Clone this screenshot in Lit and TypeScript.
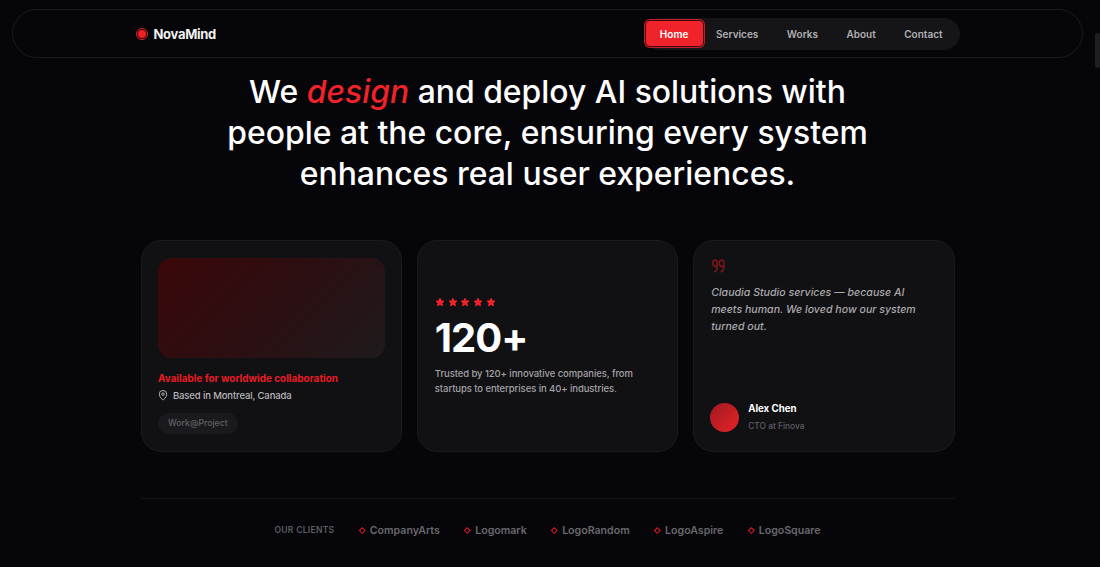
import { LitElement, html, css } from "lit";
import { customElement } from "lit/decorators.js";

const star = html`<svg class="star" viewBox="0 0 24 24" aria-hidden="true"><path d="M12 3l2.8 6.1 6.7.8-5 4.6 1.4 6.6L12 17.8l-5.9 3.3 1.4-6.6-5-4.6 6.7-.8z"/></svg>`;

const clients = ["CompanyArts", "Logomark", "LogoRandom", "LogoAspire", "LogoSquare"];

@customElement("app-root")
export class AppRoot extends LitElement {
  static styles = css`
    :host {
      display: block;
      width: 1100px;
      height: 567px;
      overflow: hidden;
      position: relative;
      background: #060509;
      font-family: "Inter", "Liberation Sans", sans-serif;
      color: #fff;
    }
    .page { width: 1095px; display: flex; flex-direction: column; align-items: center; }
    .header {
      box-sizing: border-box;
      width: 1071px;
      height: 49px;
      margin: 9px 0 0;
      border: 1px solid #1b1a1e;
      border-radius: 25px;
      display: flex;
      justify-content: center;
      align-items: center;
    }
    .bar { width: 824px; display: flex; justify-content: space-between; align-items: center; }
    .brand { display: flex; align-items: center; gap: 6px; font-size: 13px; font-weight: 700; color: #f2f2f2; letter-spacing: -0.3px; }
    .dot {
      box-sizing: border-box; width: 12px; height: 12px; border-radius: 50%;
      border: 1px solid #ee2029; padding: 1px; display: flex;
    }
    .dot i { flex: 1; border-radius: 50%; background: #ee2029; }
    .nav {
      display: flex; align-items: center; background: #151417; border-radius: 16px; height: 32px;
      font-size: 10px; font-weight: 600; color: #b0afb3; padding-right: 2.75px;
    }
    .nav a { padding: 0 14.25px; line-height: 32px; }
    .nav a.active {
      box-sizing: border-box; width: 57px; height: 25px; margin: 0 -0.75px 0 1.5px; padding: 0;
      text-align: center; line-height: 26px; color: #fff;
      background: #ef2329; border-radius: 4px;
      box-shadow: 0 0 0 1px #3d0a0e, 0 0 0 2px #c21f26;
    }
    h1 {
      margin: 12.5px 0 0; width: 680px; text-align: center;
      font-size: 31.9px; line-height: 41px; font-weight: 500; color: #fff; letter-spacing: 0;
    }
    h1 em { color: #ef2329; font-style: italic; }
    .cards { display: grid; grid-template-columns: repeat(3, 1fr); gap: 15px; width: 814px; margin-top: 46.5px; }
    .card {
      box-sizing: border-box; height: 212px; background: #111013; border: 1px solid #1b1a1e; border-radius: 20px;
      padding: 17px; display: flex; flex-direction: column;
    }
    .avail-card { padding-left: 16.5px; padding-right: 16px; }
    .media {
      height: 100px; border-radius: 14px; flex: none;
      background: linear-gradient(135deg, #3b0709 0%, #2b1013 55%, #1e1a1c 100%);
    }
    .avail { margin-top: 13px; font-size: 9.95px; font-weight: 700; color: #e91c24; line-height: 14px; }
    .loc { display: flex; align-items: center; gap: 5px; margin-top: 3.5px; font-size: 9.5px; letter-spacing: -0.13px; font-weight: 500; color: #b8b7bb; line-height: 14px; }
    .loc svg { width: 10px; height: 11px; fill: none; stroke: #b8b7bb; stroke-width: 1.2; }
    .tag {
      align-self: flex-start; margin-top: 10.5px; height: 21px; line-height: 21px; padding: 0 10px;
      border-radius: 11px; background: #1a191d; color: #626166; font-size: 8.7px; font-weight: 500;
    }
    .stat { justify-content: center; }
    .stars { display: flex; gap: 2.8px; }
    .star { width: 10px; height: 10px; fill: #ef2329; stroke: #ef2329; stroke-width: 2.4; stroke-linejoin: round; }
    .num { font-size: 40px; line-height: 46px; font-weight: 700; color: #fff; margin-top: 8px; letter-spacing: -1px; }
    .desc { margin-top: 5px; font-size: 9.5px; letter-spacing: -0.08px; line-height: 15px; color: #a3a2a6; font-weight: 500; }
    .qm { height: 14px; width: 13px; flex: none; margin: 1px 0 0 0.5px; }
    .qm svg { display: block; width: 13px; height: 14px; fill: none; stroke: #7d1519; stroke-width: 1.7; }
    .quote { margin-top: 11px; font-size: 10.6px; line-height: 17.2px; font-style: italic; color: #aaa9ad; font-weight: 500; }
    .person { margin-top: auto; margin-bottom: 2px; display: flex; align-items: flex-end; gap: 8.7px; }
    .avatar { width: 29px; height: 29px; margin-left: -0.7px; border-radius: 50%; background: linear-gradient(135deg, #9e1a1f, #e9222a); flex: none; }
    .name { font-size: 9.7px; font-weight: 700; color: #fff; line-height: 14px; margin-bottom: 4px; }
    .role { font-size: 8.4px; color: #5f5e63; line-height: 12px; font-weight: 500; }
    .foot { width: 814px; margin-top: 46px; border-top: 1px solid #151417; display: flex; justify-content: center; align-items: center; height: 62px; color: #6a696e; }
    .label { font-size: 8.5px; letter-spacing: 0.3px; font-weight: 600; color: #5e5d62; margin-right: 24.3px; }
    .client { display: flex; align-items: center; gap: 4.5px; font-size: 10.6px; font-weight: 600; margin-right: 24.3px; color: #69686d; }
    .client:last-child { margin-right: 0; }
    .dia { box-sizing: border-box; width: 4.6px; height: 4.6px; border: 1.5px solid #e01c24; transform: rotate(45deg); margin: 0 1px; }
    .thumb { position: absolute; right: 0; top: 33px; width: 5px; height: 35px; background: #1f1e21; border-radius: 2px; }
  `;

  render() {
    return html`
      <div class="page">
        <header class="header">
          <div class="bar">
            <div class="brand"><span class="dot"><i></i></span>NovaMind</div>
            <nav class="nav">
              <a class="active">Home</a><a>Services</a><a>Works</a><a>About</a><a>Contact</a>
            </nav>
          </div>
        </header>
        <h1>We <em>design</em> and deploy AI solutions with people at the core, ensuring every system enhances real user experiences.</h1>
        <section class="cards">
          <article class="card avail-card">
            <div class="media"></div>
            <div class="avail">Available for worldwide collaboration</div>
            <div class="loc">
              <svg viewBox="0 0 12 14"><path d="M6 13S1.2 8.8 1.2 5.4a4.8 4.8 0 0 1 9.6 0C10.8 8.8 6 13 6 13z"/><circle cx="6" cy="5.3" r="1.6"/></svg>
              Based in Montreal, Canada
            </div>
            <div class="tag">Work@Project</div>
          </article>
          <article class="card stat">
            <div class="stars">${star}${star}${star}${star}${star}</div>
            <div class="num">120+</div>
            <div class="desc">Trusted by 120+ innovative companies, from startups to enterprises in 40+ industries.</div>
          </article>
          <article class="card">
            <div class="qm"><svg viewBox="0 0 14 14" preserveAspectRatio="none"><path d="M3.3 1a2.4 2.4 0 0 1 2.4 2.4v4c0 3-1.2 4.8-3.6 5.6M3.3 1a2.4 2.4 0 0 0-2.4 2.4v1.5a2.4 2.4 0 0 0 2.4 2.4h2.4M10.4 1a2.4 2.4 0 0 1 2.4 2.4v4c0 3-1.2 4.8-3.6 5.6M10.4 1A2.4 2.4 0 0 0 8 3.4v1.5a2.4 2.4 0 0 0 2.4 2.4h2.4"/></svg></div>
            <div class="quote">Claudia Studio services — because AI meets human. We loved how our system turned out.</div>
            <div class="person">
              <div class="avatar"></div>
              <div><div class="name">Alex Chen</div><div class="role">CTO at Finova</div></div>
            </div>
          </article>
        </section>
        <footer class="foot">
          <span class="label">OUR CLIENTS</span>
          ${clients.map((c) => html`<span class="client"><i class="dia"></i>${c}</span>`)}
        </footer>
      </div>
      <div class="thumb"></div>
    `;
  }
}
